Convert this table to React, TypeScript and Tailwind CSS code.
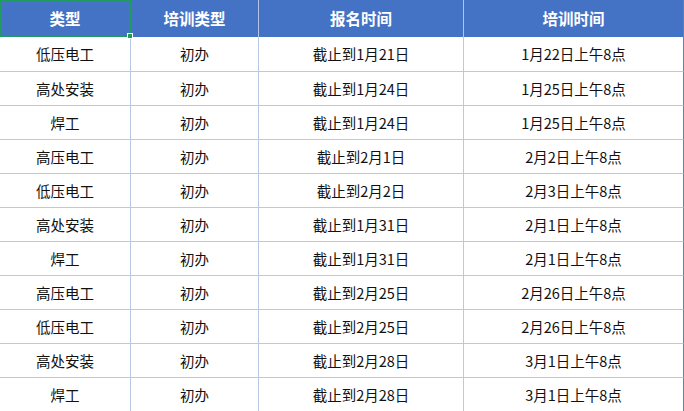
import React from 'react'

const rows: [string, string, string, string][] = [
  ['低压电工', '初办', '截止到1月21日', '1月22日上午8点'],
  ['高处安装', '初办', '截止到1月24日', '1月25日上午8点'],
  ['焊工', '初办', '截止到1月24日', '1月25日上午8点'],
  ['高压电工', '初办', '截止到2月1日', '2月2日上午8点'],
  ['低压电工', '初办', '截止到2月2日', '2月3日上午8点'],
  ['高处安装', '初办', '截止到1月31日', '2月1日上午8点'],
  ['焊工', '初办', '截止到1月31日', '2月1日上午8点'],
  ['高压电工', '初办', '截止到2月25日', '2月26日上午8点'],
  ['低压电工', '初办', '截止到2月25日', '2月26日上午8点'],
  ['高处安装', '初办', '截止到2月28日', '3月1日上午8点'],
  ['焊工', '初办', '截止到2月28日', '3月1日上午8点'],
]

const headers = ['类型', '培训类型', '报名时间', '培训时间']

export default function App() {
  return (
    <div
      className="relative w-[684px] h-[411px] overflow-hidden bg-white"
      style={{ fontFamily: '"Noto Sans CJK SC", "Noto Sans", sans-serif' }}
    >
      <div className="grid grid-cols-[131px_128px_205px_220px] grid-rows-[37px_repeat(11,34px)] border-b border-[#5f7fb5]">
        {headers.map((h, i) => (
          <div
            key={h}
            className={`flex items-center justify-center bg-[#4472c4] text-white font-bold text-[15.5px] ${
              i < 3 ? 'border-r border-[#b4c6e7]' : 'border-r border-[#5f7fb5]'
            }`}
          >
            {h}
          </div>
        ))}
        {rows.map((r, ri) =>
          r.map((c, ci) => (
            <div
              key={`${ri}-${ci}`}
              className={`flex items-center justify-center text-[14.5px] text-[#111] border-t border-[#b8c9e6] ${
                ci < 3 ? 'border-r border-r-[#b8c9e6]' : 'border-r border-r-[#5f7fb5]'
              } ${ri === 0 ? 'border-t-0' : ''}`}
            >
              {c}
            </div>
          ))
        )}
      </div>
      {/* selected cell */}
      <div className="absolute left-0 top-0 w-[131px] h-[37px] border-2 border-[#1f9b5f] pointer-events-none" />
      <div className="absolute left-[127px] top-[33px] w-[6px] h-[6px] bg-[#1f9b5f] border border-white" />
    </div>
  )
}
